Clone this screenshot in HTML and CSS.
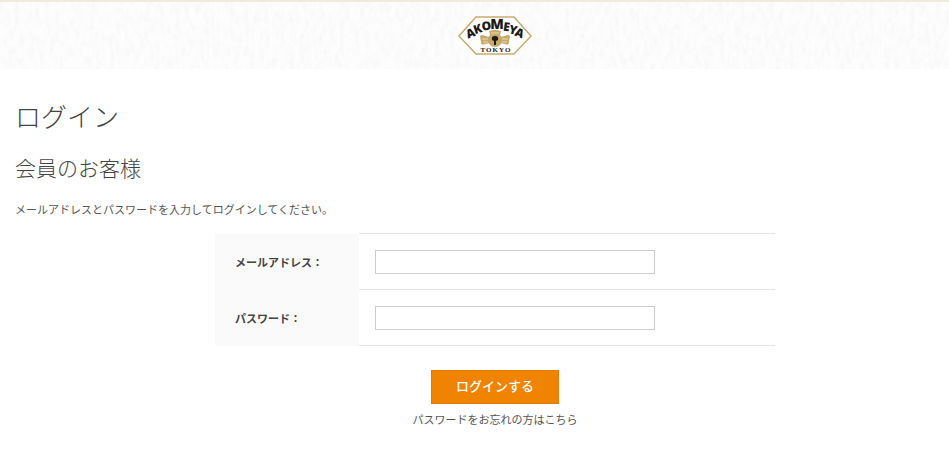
FILE: index.html
```html
<!DOCTYPE html>
<html lang="ja">
<head>
    <meta charset="UTF-8">
    <meta name="viewport" content="width=device-width, initial-scale=1.0">
    <title>ログイン | AKOMEYA TOKYO</title>
    <link rel="stylesheet" href="styles.css">
</head>
<body>
<header class="header">
    <!-- 和紙の背景 -->
    <svg class="header-paper" width="100%" height="100%" aria-hidden="true">
        <filter id="paper" x="0" y="0" width="100%" height="100%">
            <feTurbulence type="fractalNoise" baseFrequency="0.2 0.09" numOctaves="3" seed="4"/>
            <feColorMatrix values="0 0 0 0 0.6  0 0 0 0 0.6  0 0 0 0 0.6  0.25 0 0 0 -0.1"/>
        </filter>
        <rect width="100%" height="100%" filter="url(#paper)"/>
    </svg>
    <a href="#" class="logo" aria-label="AKOMEYA TOKYO">
        <svg width="74" height="40" viewBox="0 0 74 40">
            <path d="M18 1H56L73 20L56 38H18L1 20Z" fill="#fff" stroke="#c9ab70" stroke-width="1.5"/>
            <g fill="#c9a969">
                <path d="M31 15Q37 13 43 15L42 19H32Z"/>
                <path d="M22 20Q24 18 27 20L32 21V27L27 28Q23 30 23 26Z"/>
                <path d="M52 20Q50 18 47 20L42 21V27L47 28Q51 30 51 26Z"/>
                <circle cx="37" cy="24" r="7"/>
            </g>
            <path d="M24 23H30M25 26H30M44 23H50M44 26H49M33 17H41" stroke="#e9d9b4" fill="none"/>
            <path d="M34 24Q33 20 37 20Q41 20 40 24L38 25V29H36V25Z" fill="#1d1a17"/>
            <g class="logo-name">
                <text transform="translate(14 21) rotate(-22)">A</text>
                <text transform="translate(21 17) rotate(-18)">K</text>
                <text transform="translate(29 14) rotate(-8)">O</text>
                <text transform="translate(39 13)" class="logo-big">M</text>
                <text transform="translate(48 15) rotate(8)">E</text>
                <text transform="translate(54 18) rotate(14)">Y</text>
                <text transform="translate(60 21) rotate(22)">A</text>
            </g>
            <text x="38" y="36" class="logo-city">TOKYO</text>
        </svg>
    </a>
</header>

<main class="container">
    <h1>ログイン</h1>
    <h2>会員のお客様</h2>
    <p class="lead">メールアドレスとパスワードを入力してログインしてください。</p>
    <form class="login-form">
        <table>
            <tr>
                <th><label for="email">メールアドレス：</label></th>
                <td><input type="text" id="email" name="email"></td>
            </tr>
            <tr>
                <th><label for="password">パスワード：</label></th>
                <td><input type="password" id="password" name="password"></td>
            </tr>
        </table>
        <button type="submit">ログインする</button>
        <a href="#" class="forgot">パスワードをお忘れの方はこちら</a>
    </form>
</main>
</body>
</html>
```
FILE: styles.css
```css
/* 全体 */
* {
    box-sizing: border-box;
}

html {
    overflow-x: hidden;
}

body {
    min-width: 990px;
    margin: 0;
    background: #fff;
    color: #444;
    font-family: "Noto Sans CJK JP", sans-serif;
    font-size: 11px;
    line-height: 16px;
}

/* ヘッダー */
.header {
    position: relative;
    display: flex;
    justify-content: center;
    padding: 14px 0 13px;
    border-top: 2px solid #f1ebdc;
    background: #fdfdfd;
}

.header-paper {
    position: absolute;
    top: 0;
    left: 0;
}

.logo {
    position: relative;
}

.logo svg {
    display: block;
    overflow: visible;
}

.logo-name {
    fill: #1d1a17;
    font-family: "Open Sans", sans-serif;
    font-size: 12px;
    font-weight: 800;
    text-anchor: middle;
}

.logo-big {
    font-size: 14px;
}

.logo-city {
    fill: #1d1a17;
    font-family: "Liberation Serif", serif;
    font-size: 7px;
    font-weight: bold;
    letter-spacing: 1px;
    text-anchor: middle;
}

/* ログイン */
.container {
    padding: 28px 15px;
}

h1,
h2 {
    margin: 0;
    font-weight: 300;
}

h1 {
    margin-bottom: 16px;
    font-size: 26px;
    line-height: 38px;
}

h2 {
    margin-bottom: 18px;
    font-size: 21px;
    line-height: 32px;
}

.lead {
    margin: 0 0 16px;
    color: #555;
}

.login-form {
    display: flex;
    flex-direction: column;
    align-items: center;
}

table {
    width: 560px;
    margin-bottom: 24px;
    border-collapse: collapse;
}

th {
    width: 144px;
    padding: 0 20px;
    background: #fafafa;
    font-weight: bold;
    text-align: left;
}

td {
    height: 56px;
    padding: 0 16px;
    border-top: 1px solid #e6e6e6;
    border-bottom: 1px solid #e6e6e6;
}

input {
    display: block;
    width: 280px;
    height: 24px;
    padding: 2px 6px;
    border: 1px solid #ccc;
    background: #fff;
    font: inherit;
}

button {
    height: 34px;
    padding: 0 24px 2px;
    margin-bottom: 7px;
    border: 1px solid #e57b00;
    background: #f08300;
    color: #fff;
    font-family: inherit;
    font-size: 13px;
    font-weight: 500;
    line-height: 16px;
    cursor: pointer;
}

.forgot {
    color: #555;
    text-decoration: none;
}

.forgot:hover {
    text-decoration: underline;
}
```
